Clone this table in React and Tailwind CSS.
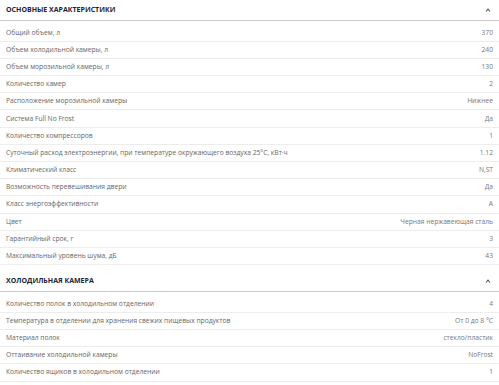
import React from "react";

const main = [
  ["Общий объем, л", "370"],
  ["Объем холодильной камеры, л", "240"],
  ["Объем морозильной камеры, л", "130"],
  ["Количество камер", "2"],
  ["Расположение морозильной камеры", "Нижнее"],
  ["Система Full No Frost", "Да"],
  ["Количество компрессоров", "1"],
  ["Суточный расход электроэнергии, при температуре окружающего воздуха 25°C, кВт·ч", "1.12"],
  ["Климатический класс", "N,ST"],
  ["Возможность перевешивания двери", "Да"],
  ["Класс энергоэффективности", "A"],
  ["Цвет", "Черная нержавеющая сталь"],
  ["Гарантийный срок, г", "3"],
  ["Максимальный уровень шума, дБ", "43"],
];

const fridge = [
  ["Количество полок в холодильном отделении", "4"],
  ["Температура в отделении для хранения свежих пищевых продуктов", "От 0 до 8 °C"],
  ["Материал полок", "стекло/пластик"],
  ["Оттаивание холодильной камеры", "NoFrost"],
  ["Количество ящиков в холодильном отделении", "1"],
];

function Chevron() {
  return (
    <svg width="6" height="4" viewBox="0 0 6 4" className="mr-[4px]">
      <polyline points="1,3.5 3,1.2 5,3.5" fill="none" stroke="#555" strokeWidth="1.1" />
    </svg>
  );
}

function Section({ title, rows, className }) {
  return (
    <div className={className}>
      <div className="h-[21px] flex items-center justify-between pl-[6px] pr-[4px] border-b border-[#c9c9c9]">
        <span className="text-[7px] font-bold text-[#1f2233]">{title}</span>
        <Chevron />
      </div>
      <div className="mt-[3.5px]">
        {rows.map(([k, v]) => (
          <div
            key={k}
            className="h-[17.2px] flex items-center justify-between pl-[6px] pr-[6px] border-b border-[#ededed] text-[6.7px] text-[#666]"
          >
            <span>{k}</span>
            <span className="text-[#777]">{v}</span>
          </div>
        ))}
      </div>
    </div>
  );
}

export default function App() {
  return (
    <div
      className="w-[499px] h-[385px] bg-white overflow-hidden"
      style={{ fontFamily: '"Open Sans", "Liberation Sans", sans-serif' }}
    >
      <Section title="ОСНОВНЫЕ ХАРАКТЕРИСТИКИ" rows={main} />
      <Section title="ХОЛОДИЛЬНАЯ КАМЕРА" rows={fridge} className="mt-[6px]" />
    </div>
  );
}
